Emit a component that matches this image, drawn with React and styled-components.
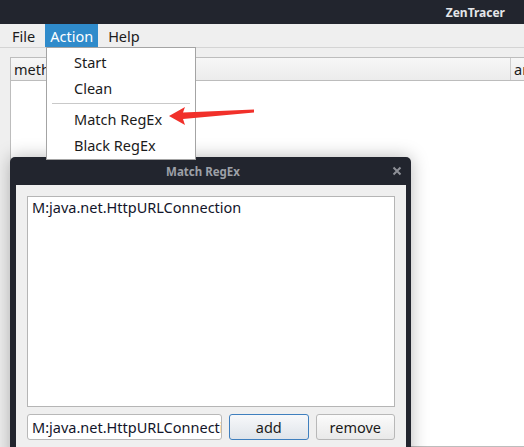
import React from 'react';
import styled, { createGlobalStyle } from 'styled-components';

const GlobalStyle = createGlobalStyle`
  html, body {
    margin: 0;
    padding: 0;
    width: 524px;
    height: 447px;
    overflow: hidden;
    background: #ffffff;
  }
  * {
    box-sizing: border-box;
  }
`;

const Screen = styled.div`
  position: relative;
  width: 524px;
  height: 447px;
  overflow: hidden;
  font-family: 'Noto Sans', 'Open Sans', sans-serif;
  font-size: 14.5px;
  color: #1b1b1b;
  display: flex;
  flex-direction: column;
  background: #efefef;
`;

const TitleBar = styled.div`
  height: 24px;
  flex: none;
  background: #22252e;
  color: #e4e5e8;
  font-weight: bold;
  font-size: 12px;
  display: flex;
  align-items: center;
  justify-content: flex-end;
  padding-right: 19px;
`;

const MenuBar = styled.div`
  height: 24px;
  flex: none;
  display: flex;
  align-items: stretch;
  padding-left: 7px;
  gap: 5px;
  border-bottom: 1px solid #d4d4d4;
  background: #efefef;
`;

const MenuTitle = styled.div`
  display: flex;
  align-items: center;
  padding: 0 5px;
  background: ${p => (p.$open ? '#2f8bcb' : 'transparent')};
  color: ${p => (p.$open ? '#ffffff' : '#1b1b1b')};
`;

const Content = styled.div`
  flex: 1;
  padding: 9px 0 0 10px;
  display: flex;
`;

const Table = styled.div`
  flex: 1;
  display: flex;
  flex-direction: column;
  border: 1px solid #bdbdbd;
  border-right: none;
  background: #ffffff;
  min-width: 0;
`;

const HeaderRow = styled.div`
  height: 23px;
  flex: none;
  display: flex;
  border-bottom: 1px solid #bcbcbc;
  background: linear-gradient(#f7f7f7, #ececec);
`;

const HeaderCell = styled.div`
  width: ${p => p.$width}px;
  flex: none;
  display: flex;
  align-items: center;
  padding-left: 3px;
  white-space: nowrap;
  overflow: hidden;
  border-right: 1px solid #cdcdcd;
`;

const Dropdown = styled.div`
  position: absolute;
  left: 46px;
  top: 47px;
  width: 150px;
  padding: 1px 0;
  background: #ffffff;
  border: 1px solid #a4a4a4;
  z-index: 3;
`;

const DropItem = styled.div`
  height: 26px;
  display: flex;
  align-items: center;
  padding-left: 27px;
`;

const DropSeparator = styled.div`
  height: 1px;
  margin: 2px 5px;
  background: #c9c9c9;
`;

const Arrow = styled.svg`
  position: absolute;
  left: 160px;
  top: 100px;
  z-index: 4;
`;

const Dialog = styled.div`
  position: absolute;
  left: 10px;
  top: 157px;
  width: 401px;
  height: 310px;
  background: #22252e;
  border-radius: 5px 5px 0 0;
  box-shadow: 0 0 18px rgba(0, 0, 0, 0.28);
  display: flex;
  flex-direction: column;
  padding: 0 5px 0 6px;
  z-index: 2;
`;

const DialogHeader = styled.div`
  height: 28px;
  flex: none;
  position: relative;
  display: flex;
  align-items: center;
  justify-content: center;
  padding-right: 16px;
  color: #9da0a7;
  font-weight: bold;
  font-size: 11.5px;
`;

const CloseButton = styled.div`
  position: absolute;
  right: 4px;
  top: 9px;
  width: 10px;
  height: 10px;
  display: flex;
`;

const DialogBody = styled.div`
  flex: 1;
  background: #efefef;
  padding: 11px 11px 0;
  display: flex;
  flex-direction: column;
  gap: 7px;
`;

const ListBox = styled.div`
  height: 211px;
  flex: none;
  background: #ffffff;
  border: 1px solid #b5b5b5;
  padding: 0 4px;
  line-height: 20px;
  color: #12152a;
`;

const InputRow = styled.div`
  display: flex;
  gap: 7px;
  height: 26px;
`;

const TextField = styled.div`
  width: 195px;
  flex: none;
  background: #ffffff;
  border: 1px solid #b8b8b8;
  border-radius: 3px;
  display: flex;
  align-items: center;
  padding-left: 4px;
  white-space: nowrap;
  overflow: hidden;
  color: #12152a;
`;

const Button = styled.div`
  flex: 1;
  display: flex;
  align-items: center;
  justify-content: center;
  border-radius: 3px;
  border: 1px solid ${p => (p.$default ? '#3f7fbe' : '#b8b8b8')};
  background: ${p =>
    p.$default
      ? 'linear-gradient(#f7f8fa, #dfe4ea)'
      : 'linear-gradient(#fbfbfb, #e9e9e9)'};
  color: #1b1b1b;
`;

export default function App() {
  return (
    <>
      <GlobalStyle />
      <Screen>
        <TitleBar>ZenTracer</TitleBar>
        <MenuBar>
          <MenuTitle>File</MenuTitle>
          <MenuTitle $open>Action</MenuTitle>
          <MenuTitle>Help</MenuTitle>
        </MenuBar>
        <Content>
          <Table>
            <HeaderRow>
              <HeaderCell $width={500}>method</HeaderCell>
              <HeaderCell $width={120}>args</HeaderCell>
            </HeaderRow>
          </Table>
        </Content>

        <Dropdown>
          <DropItem>Start</DropItem>
          <DropItem>Clean</DropItem>
          <DropSeparator />
          <DropItem>Match RegEx</DropItem>
          <DropItem>Black RegEx</DropItem>
        </Dropdown>

        <Arrow width="100" height="30" viewBox="0 0 100 30">
          <polygon
            points="9,16 25,7 23,12.5 94,9.5 94,12.5 23,19 25,25"
            fill="#f1302a"
          />
        </Arrow>

        <Dialog>
          <DialogHeader>
            Match RegEx
            <CloseButton>
              <svg width="10" height="10" viewBox="0 0 10 10">
                <path d="M1.5 1.5 L8.5 8.5 M8.5 1.5 L1.5 8.5" stroke="#8e9097" strokeWidth="2" />
              </svg>
            </CloseButton>
          </DialogHeader>
          <DialogBody>
            <ListBox>M:java.net.HttpURLConnection</ListBox>
            <InputRow>
              <TextField>M:java.net.HttpURLConnection</TextField>
              <Button $default>add</Button>
              <Button>remove</Button>
            </InputRow>
          </DialogBody>
        </Dialog>
      </Screen>
    </>
  );
}
